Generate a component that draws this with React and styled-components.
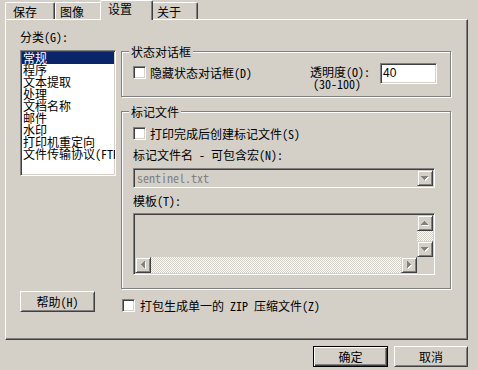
import React from 'react';
import styled, { createGlobalStyle } from 'styled-components';

const FONT = `"Noto Sans Mono CJK SC", "Noto Sans CJK SC", "Liberation Sans", sans-serif`;
const FACE = '#d4d0c8';

const Global = createGlobalStyle`
  html, body { margin: 0; padding: 0; background: ${FACE}; }
  body { font-family: ${FONT}; font-size: 12px; line-height: 12px; color: #000; }
  * { box-sizing: border-box; }
`;

const Dialog = styled.div`
  width: 478px;
  height: 370px;
  padding: 0 10px 0 5px;
  display: flex;
  flex-direction: column;
  background: ${FACE};
  overflow: hidden;
`;

const TabStrip = styled.div`
  display: flex;
  align-items: flex-end;
  height: 20px;
  margin-bottom: -1px;
  position: relative;
  z-index: 1;
`;

const Tab = styled.div`
  position: relative;
  flex: none;
  width: ${(p) => p.$w}px;
  height: ${(p) => (p.$active ? 20 : 17)}px;
  margin: ${(p) => (p.$active ? '0 -2px' : '0 0 1px 0')};
  z-index: ${(p) => (p.$active ? 2 : 1)};
  padding: ${(p) => (p.$active ? 2 : 3)}px 0 0 ${(p) => p.$pl}px;
  background: ${FACE};
  border-top: 1px solid #fff;
  border-left: 1px solid #fff;
  border-right: 1px solid #404040;
  border-top-left-radius: 2px;
  border-top-right-radius: 2px;
  box-shadow: inset -1px 0 0 #808080;
  white-space: nowrap;
`;

const Panel = styled.div`
  width: 463px;
  height: 321px;
  border-top: 1px solid #fff;
  border-left: 1px solid #fff;
  border-right: 1px solid #404040;
  border-bottom: 1px solid #404040;
  box-shadow: inset -1px -1px 0 #808080;
  padding: 11px 0 0 14px;
  display: grid;
  grid-template-columns: 96px 330px;
  column-gap: 5px;
  row-gap: 2px;
  align-items: start;
  align-content: start;
`;

const LeftCol = styled.div`
  display: flex;
  flex-direction: column;
`;

const RightCol = styled.div`
  display: flex;
  flex-direction: column;
  padding-top: 20px;
`;

const Label = styled.div`
  line-height: 12px;
  height: 12px;
  white-space: nowrap;
  margin-top: ${(p) => p.$mt || 0}px;
  padding-left: ${(p) => p.$pl || 0}px;
`;

const sunken = `
  border: 1px solid;
  border-color: #808080 #fff #fff #808080;
  box-shadow: inset 1px 1px 0 #404040, inset -1px -1px 0 ${FACE};
`;

const raised = `
  border: 1px solid;
  border-color: ${FACE} #404040 #404040 ${FACE};
  box-shadow: inset 1px 1px 0 #fff, inset -1px -1px 0 #808080;
`;

const ListBox = styled.div`
  width: 96px;
  height: 126px;
  margin-top: 7px;
  background: #fff;
  ${sunken}
  padding: 1px;
  overflow: hidden;
`;

const ListItem = styled.div`
  height: 12px;
  line-height: 12px;
  padding-left: 1px;
  white-space: nowrap;
  background: ${(p) => (p.$sel ? '#0a246a' : 'transparent')};
  color: ${(p) => (p.$sel ? '#fff' : '#000')};
`;

const Group = styled.div`
  position: relative;
  width: 330px;
  height: ${(p) => p.$h}px;
  margin-top: ${(p) => p.$mt || 0}px;
  border: 1px solid #808080;
  box-shadow: inset 1px 1px 0 #fff, 1px 1px 0 #fff;
  padding: ${(p) => p.$pad};
  display: flex;
  flex-direction: ${(p) => p.$dir || 'column'};
  align-items: flex-start;
`;

const Legend = styled.span`
  position: absolute;
  top: -6px;
  left: 7px;
  padding: 0 2px;
  line-height: 12px;
  background: ${FACE};
  white-space: nowrap;
`;

const CheckRow = styled.div`
  display: flex;
  align-items: center;
  gap: ${(p) => p.$gap || 4}px;
  height: 13px;
  margin-top: ${(p) => p.$mt || 0}px;
  margin-left: ${(p) => p.$ml || 0}px;
  white-space: nowrap;
`;

const Check = styled.span`
  width: 13px;
  height: 13px;
  flex: none;
  background: #fff;
  ${sunken}
`;

const Opacity = styled.div`
  margin-left: auto;
  margin-top: 3px;
  width: 70px;
  flex: none;
`;

const TextBox = styled.div`
  width: 57px;
  height: 21px;
  flex: none;
  background: #fff;
  ${sunken}
  padding: 2px 0 0 2px;
  font-family: "Liberation Sans", sans-serif;
  font-size: 12px;
  line-height: 14px;
`;

const Combo = styled.div`
  width: 100%;
  height: 20px;
  margin-top: 7px;
  display: flex;
  align-items: center;
  background: ${FACE};
  ${sunken}
  padding: 1px;
`;

const ComboText = styled.span`
  flex: 1;
  padding-left: 2px;
  color: #808080;
  line-height: 12px;
`;

const ArrowButton = styled.div`
  width: 16px;
  height: 16px;
  flex: none;
  background: ${FACE};
  ${raised}
  display: flex;
  align-items: center;
  justify-content: center;
`;

const Memo = styled.div`
  width: 100%;
  height: 62px;
  margin-top: 6px;
  background: ${FACE};
  ${sunken}
  padding: 1px;
  display: grid;
  grid-template-columns: 1fr 16px;
  grid-template-rows: 1fr 16px;
`;

const VScroll = styled.div`
  grid-column: 2;
  grid-row: 1;
  display: flex;
  flex-direction: column;
`;

const HScroll = styled.div`
  grid-column: 1;
  grid-row: 2;
  display: flex;
`;

const Track = styled.div`
  flex: 1;
  background-image: conic-gradient(#fff 25%, ${FACE} 0 50%, #fff 0 75%, ${FACE} 0);
  background-size: 2px 2px;
`;

const BottomLeft = styled.div`
  padding-top: 0;
`;

const Button = styled.button`
  width: ${(p) => p.$w || 75}px;
  height: 21px;
  margin: 0;
  padding: 0;
  font: inherit;
  color: #000;
  background: ${FACE};
  display: flex;
  align-items: center;
  justify-content: center;
  border: 1px solid;
  border-color: #fff #404040 #404040 #fff;
  box-shadow: inset 1px 1px 0 ${FACE}, inset -1px -1px 0 #808080;
  ${(p) =>
    p.$default &&
    `
    border: 1px solid #000;
    box-shadow: inset 1px 1px 0 #fff, inset -1px -1px 0 #404040, inset -2px -2px 0 #808080;
  `}
`;

const ButtonRow = styled.div`
  display: flex;
  justify-content: flex-end;
  gap: 6px;
  margin-top: 6px;
`;

const tri = {
  down: [[0, 0, 7, 1], [1, 1, 5, 1], [2, 2, 3, 1], [3, 3, 1, 1]],
  up: [[3, 0, 1, 1], [2, 1, 3, 1], [1, 2, 5, 1], [0, 3, 7, 1]],
  left: [[0, 3, 1, 1], [1, 2, 1, 3], [2, 1, 1, 5], [3, 0, 1, 7]],
  right: [[0, 0, 1, 7], [1, 1, 1, 5], [2, 2, 1, 3], [3, 3, 1, 1]],
};

function Arrow({ dir }) {
  const vert = dir === 'up' || dir === 'down';
  const w = vert ? 8 : 5;
  const h = vert ? 5 : 8;
  const r = tri[dir];
  return (
    <svg width={w} height={h} shapeRendering="crispEdges" style={{ display: 'block' }}>
      {r.map(([x, y, ww, hh], i) => (
        <rect key={'s' + i} x={x + 1} y={y + 1} width={ww} height={hh} fill="#fff" />
      ))}
      {r.map(([x, y, ww, hh], i) => (
        <rect key={i} x={x} y={y} width={ww} height={hh} fill="#808080" />
      ))}
    </svg>
  );
}

const categories = ['常规', '程序', '文本提取', '处理', '文档名称', '邮件', '水印', '打印机重定向', '文件传输协议(FTP)'];

const tabs = [
  { label: '保存', w: 50, pl: 7 },
  { label: '图像', w: 47, pl: 4 },
  { label: '设置', w: 53, pl: 7, active: true },
  { label: '关于', w: 47, pl: 5 },
];

export default function App() {
  return (
    <>
      <Global />
      <Dialog>
        <TabStrip>
          {tabs.map((t) => (
            <Tab key={t.label} $w={t.w} $pl={t.pl} $active={t.active}>
              {t.label}
            </Tab>
          ))}
        </TabStrip>
        <Panel>
          <LeftCol>
            <Label>分类(G):</Label>
            <ListBox>
              {categories.map((c, i) => (
                <ListItem key={c} $sel={i === 0}>
                  {c}
                </ListItem>
              ))}
            </ListBox>
          </LeftCol>
          <RightCol>
            <Group $h={46} $pad="11px 13px 0 11px" $dir="row">
              <Legend>状态对话框</Legend>
              <CheckRow $mt={3}>
                <Check />
                <span>隐藏状态对话框(D)</span>
              </CheckRow>
              <Opacity>
                <Label>透明度(O):</Label>
                <Label $pl={3}>(30-100)</Label>
              </Opacity>
              <TextBox>40</TextBox>
            </Group>
            <Group $h={178} $mt={14} $pad="15px 15px 0 11px">
              <Legend>标记文件</Legend>
              <CheckRow>
                <Check />
                <span>打印完成后创建标记文件(S)</span>
              </CheckRow>
              <Label $mt={9}>标记文件名 - 可包含宏(N):</Label>
              <Combo>
                <ComboText>sentinel.txt</ComboText>
                <ArrowButton>
                  <Arrow dir="down" />
                </ArrowButton>
              </Combo>
              <Label $mt={7}>模板(T):</Label>
              <Memo>
                <VScroll>
                  <ArrowButton>
                    <Arrow dir="up" />
                  </ArrowButton>
                  <Track />
                  <ArrowButton>
                    <Arrow dir="down" />
                  </ArrowButton>
                </VScroll>
                <HScroll>
                  <ArrowButton>
                    <Arrow dir="left" />
                  </ArrowButton>
                  <Track />
                  <ArrowButton>
                    <Arrow dir="right" />
                  </ArrowButton>
                </HScroll>
              </Memo>
            </Group>
          </RightCol>
          <BottomLeft>
            <Button>帮助(H)</Button>
          </BottomLeft>
          <CheckRow $mt={8} $ml={1} $gap={5}>
            <Check />
            <span>打包生成单一的 ZIP 压缩文件(Z)</span>
          </CheckRow>
        </Panel>
        <ButtonRow>
          <Button $default>确定</Button>
          <Button $w={74}>取消</Button>
        </ButtonRow>
      </Dialog>
    </>
  );
}
